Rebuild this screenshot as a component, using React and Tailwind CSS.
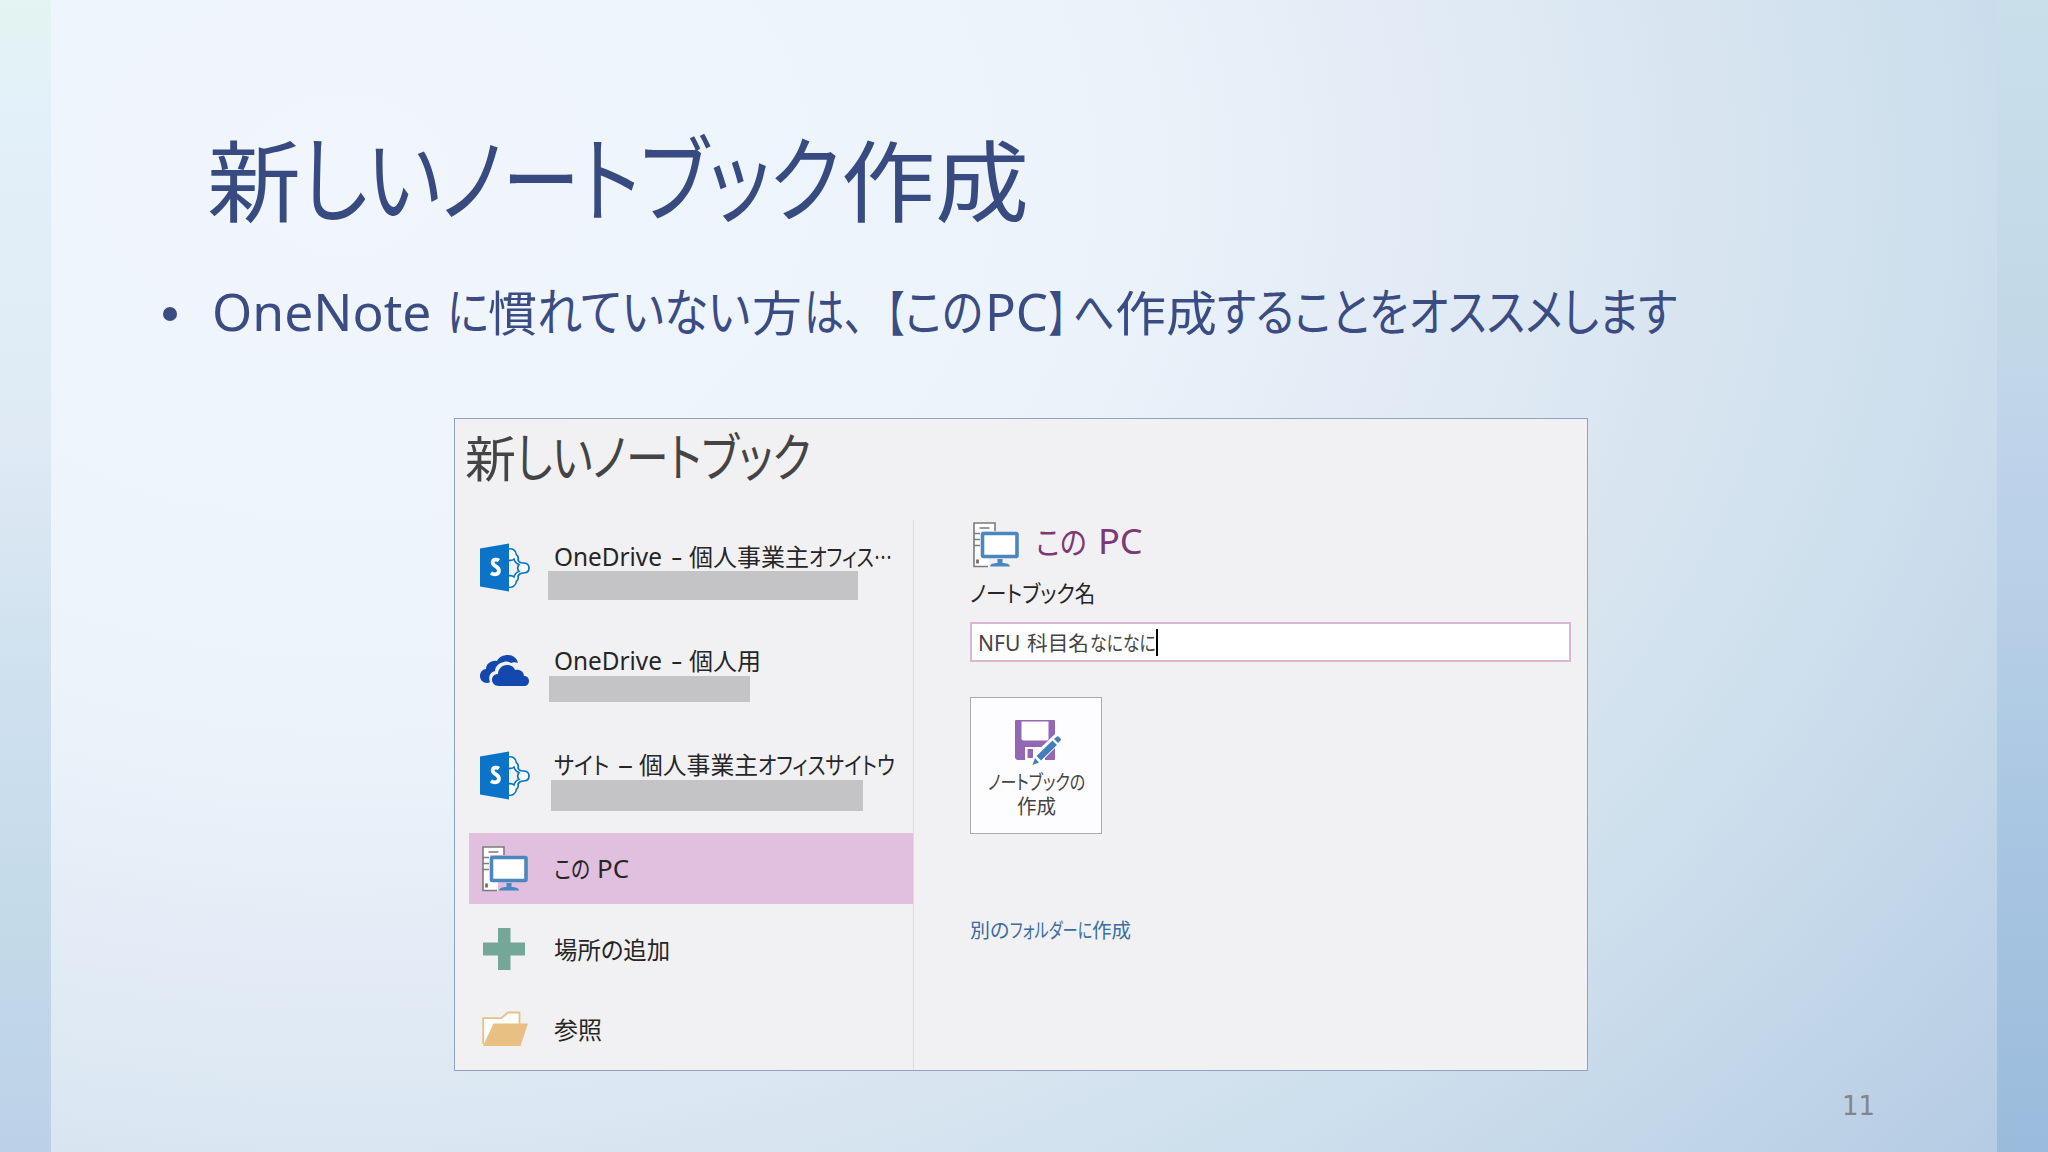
import { useLayoutEffect, useRef, useState } from 'react';

// One run of text, squeezed or stretched horizontally to a set width
const Fit = ({ text, width, gap = 0, font }) => {
  const ref = useRef(null);
  const [scale, setScale] = useState(1);

  useLayoutEffect(() => {
    setScale(width / ref.current.offsetWidth);
  }, [text, width]);

  return (
    <span className="inline-block" style={{ width, marginLeft: gap }}>
      <span
        ref={ref}
        className={`inline-block origin-left whitespace-pre ${font || ''}`}
        style={{ transform: `scaleX(${scale})` }}
      >
        {text}
      </span>
    </span>
  );
};

const LATIN = "font-['Noto_Sans','Noto_Sans_CJK_JP',sans-serif] text-[1.08em]";
const KANA = 'text-[1.06em]';

// runs: [text, width, gap before, font classes]
const Line = ({ runs, className = '' }) => (
  <div className={`flex items-baseline whitespace-nowrap leading-none ${className}`}>
    {runs.map(([text, width, gap, font], i) => (
      <Fit key={i} text={text} width={width} gap={gap} font={font} />
    ))}
  </div>
);

const SharePointIcon = () => (
  <svg width="50" height="50" viewBox="0 0 50 50" className="shrink-0">
    <g fill="#fff" stroke="#0b74c8" strokeWidth="1.700">
      <path d="M28 6c4-1 8 1 8.500 6 2 1 2 3 1.500 5 1 3 3 3 5 3 4 0 6 2 6 5s-2 5-6 5c-2 0-4 1-5 3 .5 2 0 4-1.500 5-.5 5-4.500 7-8.500 6z" />
      <path d="M28 17c3 1 5 0 6-1 1 3 3 5 5 5.500-1.500 2-1.500 5 0 7-2 .5-4 2.500-5 5.500-1-1-3-2-6-1z" fill="#f1f0f2" />
    </g>
    <path d="M0 5.500 29 .5v48L0 43.500z" fill="#0b74c8" />
    <path
      d="M19 17.500c-2-1.300-6.300-1.500-6.300 2 0 4 6.200 3.500 6.200 8.300 0 4.200-5.200 4.200-8 2.200"
      fill="none"
      stroke="#fff"
      strokeWidth="3.800"
    />
  </svg>
);

const CloudIcon = () => (
  <svg width="50" height="50" viewBox="0 0 50 50" className="shrink-0">
    <path
      d="M7 36C3 36 0 33 0 29c0-4 3-7 6-7 0-5 5-9 11-8 2-4 6-6 11-6 5 0 9 3 10 8-2-1-5-1-7 0-2-1-4-2-7-1-6 1-9 5-9 9-5 1-7 6-5 11 0 0-1 1-3 1z"
      fill="#1349ae"
    />
    <path
      d="M19 39c-4 0-7-3-7-6 0-4 3-6 6-6 0-5 4-9 9-9 4 0 7 2 8 5 5-1 9 2 9 6 3 0 5 2 5 5s-2 5-5 5z"
      fill="#1349ae"
    />
  </svg>
);

const PcIcon = () => (
  <svg width="46" height="46" viewBox="0 0 46 46" className="shrink-0">
    <path d="M1 1h21v8H8v36H1z" fill="#fff" />
    <path d="M8 36h8v9H1V9h7z" fill="#fff" />
    <path d="M22 9V1H1v43.500h14M6.500 6h10M1 11.500h6M1 17.500h6M1 23.500h6" fill="none" stroke="#7b7b7b" strokeWidth="1.600" />
    <path d="M4.500 37.500v4" stroke="#666" strokeWidth="2.600" />
    <rect x="9.500" y="11.500" width="34.500" height="23" rx="1" fill="#fff" stroke="#4a86bf" strokeWidth="3.600" />
    <path d="M24.500 37h5v4c4 0 7 .8 7.500 3.500H17c.5-2.700 3.500-3.500 7.500-3.500z" fill="#4a86bf" />
  </svg>
);

const PlusIcon = () => (
  <svg width="42" height="42" viewBox="0 0 42 42" className="ml-0.5 shrink-0">
    <path d="M15 0h12.500v14.500H42v13H27.500V42H15V27.500H0v-13h15z" fill="#74a797" />
  </svg>
);

const FolderIcon = () => (
  <svg width="47" height="36" viewBox="0 0 47 36" className="shrink-0">
    <path d="M1.200 33V7.200h18L26 1.500h11.500V14" fill="#fff" stroke="#e8c084" strokeWidth="1.800" />
    <path d="M11.500 12.500H46L38.500 35H1z" fill="#e8c084" />
  </svg>
);

const SaveIcon = () => (
  <svg width="48" height="48" viewBox="0 0 48 48" className="ml-[3px] shrink-0">
    <path d="M2 1h38q1 0 1 1v38q0 1-1 1H3l-2-2V2q0-1 1-1z" fill="#9467b5" />
    <path d="M7.500 2.500h27v17q0 2-2 2h-23q-2 0-2-2z" fill="#fff" />
    <path d="M11 28h20v13H11z" fill="#fff" />
    <path d="M13.500 30H19v9h-5.500z" fill="#9467b5" />
    <path d="M16 46 20 35 41 15l7 7-21 21z" fill="#fff" />
    <path d="m18.500 46 2.500-7 4 4.500zM22.500 37l16-15.500 4.500 4.500-16 15.500zM40 20l3-2.500q1-.5 2 .5l1.500 1.500q1 1 0 2L44 24z" fill="#427fb8" />
  </svg>
);

const titleRuns = [
  ['新', 94, 0],
  ['しいノートブック', 539, 0, KANA],
  ['作成', 188, 1],
];

const bodyRuns = [
  ['OneNote', 219, 1, LATIN],
  ['に', 42, 16, KANA],
  ['慣', 49, -1],
  ['れていない', 213, 0, KANA],
  ['方', 50, 2],
  ['は、', 60, 2, KANA],
  ['【', 18, 22],
  ['この', 78, 1, KANA],
  ['PC', 63, 2, LATIN],
  ['】', 18, 1],
  ['へ', 42, 6, KANA],
  ['作成', 102, 0],
  ['することをオススメします', 460, 0, KANA],
];

const accounts = [
  {
    icon: <SharePointIcon />,
    runs: [['OneDrive', 108, 0, LATIN], ['-', 11, 9, LATIN], ['個人事業主', 120, 7], ['オフィス', 65, 0], ['…', 18, 0]],
    bar: 'w-[310px] h-[29px]',
  },
  {
    icon: <CloudIcon />,
    runs: [['OneDrive', 108, 0, LATIN], ['-', 11, 9, LATIN], ['個人用', 72, 7]],
    bar: 'ml-px mt-px w-[201px] h-[26px]',
  },
  {
    icon: <SharePointIcon />,
    runs: [['サイト', 55, 0], ['–', 15, 9, LATIN], ['個人事業主', 119, 6], ['オフィスサイトウ', 137, 0]],
    bar: 'ml-[3px] mt-px w-[312px] h-[31px]',
  },
];

const App = () => {
  return (
    <div className="flex h-[1152px] w-[2048px] overflow-hidden font-['Noto_Sans_CJK_JP',sans-serif]">
      <div className="w-[51px] shrink-0 bg-[linear-gradient(180deg,#e3f4f1_0%,#e2f0f9_10%,#dfeaf4_38%,#cfe1ef_58%,#c3d9e8_82%,#bcd1e8_100%)]"></div>

      <main className="flex w-[1946px] shrink-0 flex-col bg-[radial-gradient(ellipse_2100px_1560px_at_15%_15%,#f1f6fc_0%,#ecf3fb_35%,#e0eaf4_55%,#ccdeec_78%,#b6cce4_100%)]">
        <h1 className="mt-[127px] ml-[156px] h-[95px] text-[89px] text-[#384b80] [font-feature-settings:'palt']">
          <Line runs={titleRuns} />
        </h1>

        <div className="mt-[65px] flex h-12 items-center text-[48px] text-[#3b4c83] [font-feature-settings:'palt']">
          <span className="mt-[5px] ml-[112px] h-[14px] w-[14px] rounded-full bg-[#3b4c83]"></span>
          <Line className="ml-[34px]" runs={bodyRuns} />
        </div>

        {/* 新しいノートブック画面 */}
        <section className="mt-[83px] ml-[403px] flex h-[653px] w-[1134px] shrink-0 flex-col border border-[#8fa2c1] bg-[#f1f0f2] [font-feature-settings:'palt']">
          <h2 className="mt-[10px] ml-[10px] h-[91px] text-[49px] text-[#444]">
            <Line runs={[['新', 51, 0], ['しいノートブック', 295, 0, KANA]]} />
          </h2>

          <div className="flex flex-1">
            {/* 保存場所の一覧 */}
            <ul className="w-[459px] border-r border-[#dcdcde] pl-[14px] text-[24px] text-[#262626]">
              {accounts.map((account, i) => (
                <li key={i} className="flex h-[104px] pt-[23px] pl-[11px]">
                  {account.icon}
                  <div className="ml-[18px]">
                    <Line className="ml-[6px] h-[28px] pt-px" runs={account.runs} />
                    <div className={`bg-[#c4c3c5] ${account.bar}`}></div>
                  </div>
                </li>
              ))}
              <li className="mt-px flex h-[71px] items-center bg-[#e1bfdf] pl-[13px]">
                <PcIcon />
                <Line className="ml-[26px]" runs={[['この', 36, 0], ['PC', 32, 7, LATIN]]} />
              </li>
              <li className="mt-[5px] flex h-20 items-center pl-[12px]">
                <PlusIcon />
                <Line className="ml-[29px]" runs={[['場所の追加', 116, 0]]} />
              </li>
              <li className="flex h-20 items-center pl-[13px]">
                <FolderIcon />
                <Line className="ml-[25px]" runs={[['参照', 48, 0]]} />
              </li>
            </ul>

            {/* 選択中の保存場所 */}
            <div className="pt-[2px] pl-[56px]">
              <div className="flex h-[46px] items-start pl-[3px] text-[32px] text-[#7e3878]">
                <PcIcon />
                <Line className="mt-[2px] ml-[17px]" runs={[['この', 51, 0], ['PC', 45, 11, LATIN]]} />
              </div>
              <Line className="mt-[13px] h-[22px] text-[23px] text-[#262626]" runs={[['ノートブック名', 125, 0]]} />
              <div className="mt-[19px] flex h-[40px] w-[601px] items-center border-2 border-[#d8b6d6] bg-white pl-[6px] text-[20px] text-[#444]">
                <Line className="mt-px" runs={[['NFU', 42, 0, LATIN], ['科目名', 62, 7], ['なになに', 66, 1]]} />
                <span className="h-[27px] w-0.5 bg-black"></span>
              </div>
              <button className="mt-[35px] flex h-[137px] w-[132px] flex-col items-center border-[1.5px] border-[#ababab] bg-[#fdfcfe] pt-[21px] text-[20px] text-[#444]">
                <SaveIcon />
                <Line className="mt-[5px]" runs={[['ノートブックの', 97, 0]]} />
                <Line className="mt-[4px]" runs={[['作成', 39, 0]]} />
              </button>
              <a className="mt-[86px] block text-[20px] text-[#3a6da0]">
                <Line runs={[['別の', 39, 0], ['フォルダーに', 82, 1], ['作成', 39, 0]]} />
              </a>
            </div>
          </div>
        </section>

        <footer className="mt-[16px] flex justify-end pr-[122px] font-['DejaVu_Sans',sans-serif] text-[26px] leading-[38px] text-[#858585]">
          11
        </footer>
      </main>

      <div className="w-[51px] shrink-0 bg-[linear-gradient(180deg,#c9dfea_0%,#c3d8e7_28%,#bdd2ea_42%,#b5cee6_55%,#a8c6e2_72%,#9bbbdc_100%)]"></div>
    </div>
  );
};

export default App;
